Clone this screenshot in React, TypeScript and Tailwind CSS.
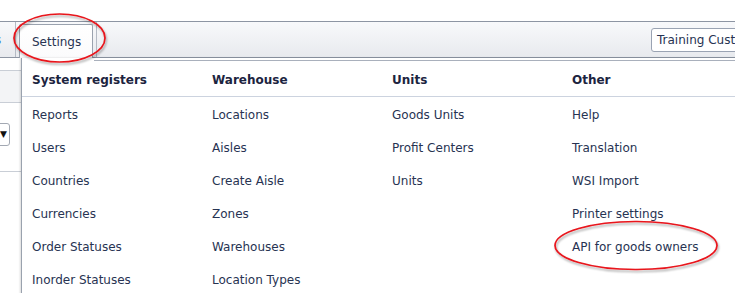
import React from 'react'

const columns: { title: string; items: string[] }[] = [
  {
    title: 'System registers',
    items: ['Reports', 'Users', 'Countries', 'Currencies', 'Order Statuses', 'Inorder Statuses'],
  },
  {
    title: 'Warehouse',
    items: ['Locations', 'Aisles', 'Create Aisle', 'Zones', 'Warehouses', 'Location Types'],
  },
  { title: 'Units', items: ['Goods Units', 'Profit Centers', 'Units'] },
  {
    title: 'Other',
    items: ['Help', 'Translation', 'WSI Import', 'Printer settings', 'API for goods owners'],
  },
]

export default function App() {
  return (
    <div className="relative h-[293px] w-[735px] overflow-hidden bg-white font-['DejaVu_Sans',sans-serif] text-[12px] text-[#273352]">
      <div className="h-[21px]" />

      {/* toolbar */}
      <div className="flex h-[37px] border-y border-[#8d95a3] bg-gradient-to-b from-[#f8f9fb] to-[#e8eaee]">
        <div className="flex w-[16px] items-center overflow-hidden border-r border-[#b4bac4]">
          <span className="-ml-[5px] text-[#3b7ed8]">s</span>
        </div>
        <div className="w-[3px]" />
        <div className="-mb-px flex h-[34px] w-[74px] items-center self-end rounded-t-[2px] border-x border-t border-[#9aa2ae] bg-gradient-to-b from-[#ffffff] to-[#fbfbfc] pl-[12px] text-[#273352]">
          Settings
        </div>
        <div className="ml-[3px] w-px self-stretch bg-[#b4bac4]" />
        <div className="flex-1" />
        <div className="-mr-[20px] flex h-[24px] w-[104px] shrink-0 items-center self-center rounded-[3px] border border-[#9aa3b3] bg-white pl-[5px] whitespace-nowrap">
          Training Customer
        </div>
      </div>

      <div className="flex">
        {/* left strip behind the menu */}
        <div className="w-[21px] shrink-0">
          <div className="h-[12px]" />
          <div className="h-[33px] border-y border-[#c9ced6] bg-[#f3f4f6]" />
          <div className="h-[20px]" />
          <div className="-ml-[12px] flex h-[23px] w-[22px] items-center justify-end rounded-[3px] border border-[#a3a9b3] bg-white pr-[2px] text-[9px] text-[#111]">
            ▼
          </div>
          <div className="h-[26px] border-b border-[#c9ced6]" />
        </div>

        {/* dropdown panel */}
        <div className="flex-1 border-l border-[#9aa2ae] bg-white shadow-[-1px_0_2px_rgba(0,0,0,0.15)]">
          <div className="flex h-[3px]">
            <div className="w-[72px]" />
            <div className="flex-1 border-b border-[#a9b0bc]" />
          </div>
          <div className="flex border-b border-[#ccd3df] pb-[8px] pl-[10px] pt-[12px]">
            {columns.map((c) => (
              <div key={c.title} className="w-[180px] shrink-0 text-[12px] font-bold leading-[15px] text-[#1c2440]">
                {c.title}
              </div>
            ))}
          </div>
          <div className="flex pl-[10px] pt-[2px]">
            {columns.map((c) => (
              <ul key={c.title} className="w-[180px] shrink-0">
                {c.items.map((item) => (
                  <li key={item} className="h-[33px] whitespace-nowrap leading-[33px]">
                    {item}
                  </li>
                ))}
              </ul>
            ))}
          </div>
        </div>
      </div>

      {/* red annotation ellipses */}
      <svg className="pointer-events-none absolute inset-0" width="735" height="293">
        <defs>
          <filter id="sh" x="-20%" y="-20%" width="140%" height="140%">
            <feDropShadow dx="1" dy="2" stdDeviation="1" floodColor="#000" floodOpacity="0.35" />
          </filter>
        </defs>
        <ellipse cx="59.5" cy="38" rx="45.5" ry="24" fill="none" stroke="#e8141b" strokeWidth="1.7" filter="url(#sh)" />
        <ellipse cx="636" cy="245.5" rx="81" ry="24" fill="none" stroke="#e8141b" strokeWidth="1.7" filter="url(#sh)" />
      </svg>
    </div>
  )
}
